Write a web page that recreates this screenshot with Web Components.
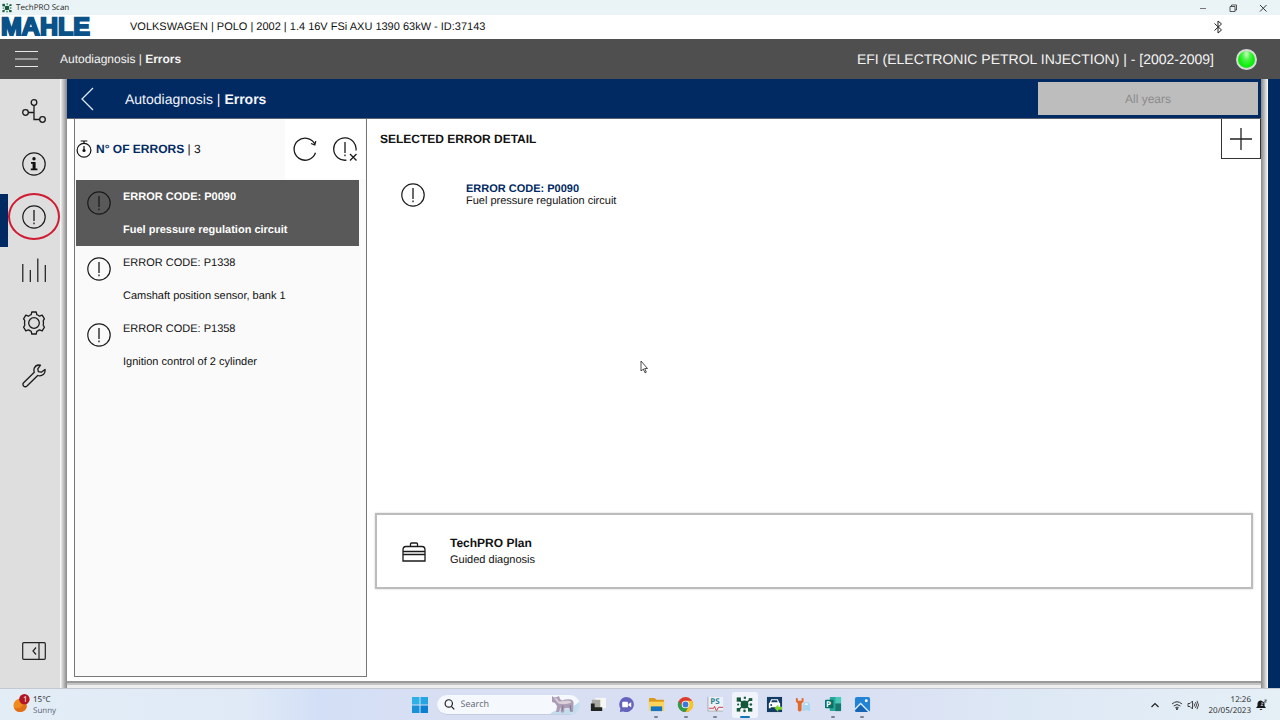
<!DOCTYPE html>
<html lang="en">
<head>
<meta charset="utf-8">
<title>TechPRO Scan</title>
<style>
  html, body { margin: 0; }
  body {
    --navy: #012a63;
    --ink: #111;
    --ui: "Liberation Sans", Arial, sans-serif;
    --os: "Open Sans", "Noto Sans", sans-serif;
    font-family: var(--ui);
    font-size: 11px;
    color: var(--ink);
    background: #fff;
    text-rendering: geometricPrecision;
  }
</style>
</head>
<body>
<scan-app></scan-app>
<script>
const ICONS = {
  scan: ['0 0 24 24', '<g fill="#15583a"><circle cx="12" cy="12" r="5.500"/><rect x="1" y="2" width="6" height="6"/><rect x="18" y="3" width="5" height="4"/><rect x="1" y="17" width="5" height="5"/><rect x="17" y="17" width="6" height="5"/><rect x="11" y="1" width="3" height="3"/><circle cx="12" cy="21" r="1.800"/><circle cx="21" cy="12" r="1.800"/><circle cx="3" cy="12" r="1.500"/><path d="M4 5l16 14M20 5L4 19" stroke="#15583a" stroke-width="2"/></g>'],
  minimise: ['0 0 12 12', '<path d="M3 6.500h6" stroke="#777" fill="none"/>'],
  restore: ['0 0 12 12', '<path d="M3 4.500h5v5H3zM4.500 4.500V3h5v5H8" stroke="#333" stroke-width=".8" fill="none"/>'],
  close: ['0 0 12 12', '<path d="M3 3l6.500 6.500M9.500 3L3 9.500" stroke="#333" fill="none"/>'],
  bluetooth: ['0 0 12 16', '<path d="M2.500 4.500l7 6.500L6 14V2l3.500 3-7 6.500" stroke="#222" fill="none"/>'],
  menu: ['0 0 24 18', '<path d="M0 1.500h23M0 9h23M0 16.500h23" stroke="#e8e8e8" stroke-width="1.200"/>'],
  back: ['0 0 24 24', '<path d="M17 1L6 12l11 11" stroke="#dfe8f5" stroke-width="1.300" fill="none"/>'],
  tree: ['0 0 24 24', '<g stroke="#1a1a1a" stroke-width="1.300" fill="none"><circle cx="12" cy="3.500" r="2.800"/><circle cx="3.500" cy="13.500" r="2.800"/><circle cx="20.500" cy="20.500" r="2.800"/><path d="M12 6.300v14.200h5.700M6.300 13.500H12"/></g>'],
  info: ['0 0 24 24', '<circle cx="12" cy="12" r="11.200" fill="none" stroke="#1a1a1a" stroke-width="1.200"/><circle cx="12" cy="6.800" r="1.700" fill="#111"/><path d="M9 10h4.600v6.500h1.800v1.800H8.800v-1.800h1.800v-4.700H9z" fill="#111"/>'],
  alert: ['0 0 24 24', '<circle cx="12" cy="12" r="11.200" fill="none" stroke="#1a1a1a" stroke-width="1.200"/><path d="M12 5v11M12 17.500v1.800" stroke="#1a1a1a" stroke-width="1.300"/>'],
  bars: ['0 0 24 24', '<path d="M.8 6v18M8.300 12v12M15.800 .5V24M23.300 7v17" stroke="#1a1a1a" stroke-width="1.200"/>'],
  gear: ['0 0 24 24', '<g fill="none" stroke="#1a1a1a" stroke-width="1.300" stroke-linejoin="round"><circle cx="12" cy="12" r="5.300"/><path d="M9.800 1h4.400l.6 2.700q1.500.5 2.700 1.500l2.700-1 2.200 3.700-1 1.500q-.5.900.1 1.800-.3.800 0 1.600-.6.900-.1 1.800l1 1.500-2.200 3.700-2.700-1q-1.200 1-2.700 1.500l-.6 2.700H9.800l-.6-2.700q-1.500-.5-2.700-1.500l-2.700 1-2.200-3.700 1-1.500q.5-.9-.1-1.800.3-.8 0-1.600.6-.9.100-1.800l-1-1.500 2.200-3.700 2.700 1q1.200-1 2.700-1.500z"/></g>'],
  wrench: ['0 0 24 24', '<path d="M18.500 1.200Q14 .3 12.300 4q-.8 2 0 4.300L1.600 18.700q-1.400 1.600 0 3.300 1.700 1.500 3.400 0L15.700 11.500q3.300 1 5.600-.9 2.300-2.200 1.700-5.200l-3.700 2.800-3-.5-.5-2.900z" fill="none" stroke="#1a1a1a" stroke-width="1.300" stroke-linejoin="round"/>'],
  panel: ['0 0 24 18', '<rect x=".7" y=".7" width="22.600" height="16.600" rx="1" fill="none" stroke="#222" stroke-width="1.200"/><path d="M17 .7v16.600M14 5.500L11 9l3 3.500" fill="none" stroke="#222" stroke-width="1.200"/>'],
  timer: ['0 0 16 18', '<g fill="none" stroke="#111" stroke-width="1.200"><circle cx="8" cy="10.300" r="6.900"/><path d="M4.700 1h6.600M8 1v2.500M8 6v4.500"/></g><circle cx="8" cy="10.500" r="1.600" fill="#111"/>'],
  refresh: ['0 0 24 24', '<path d="M22.500 15.800A11 11 0 1 1 21.800 7M22.800 4.200l-1 3.800-3.800-1.500" fill="none" stroke="#1a1a1a" stroke-width="1.300"/>'],
  clear: ['0 0 24 24', '<path d="M13.500 23.100A11.200 11.200 0 1 1 23 13.500M12 5v11M12 17.500v1.800M17 17l6.500 6.500M23.500 17L17 23.500" fill="none" stroke="#1a1a1a" stroke-width="1.300"/>'],
  plus: ['0 0 24 24', '<path d="M12 1v22M1 12h22" stroke="#222" stroke-width="1.300"/>'],
  toolbox: ['0 0 24 20', '<path d="M1 8q0-3.500 3-3.500h16q3 0 3 3.500v11H1zM8.500 4.500V2q0-1 1-1h5q1 0 1 1v2.500M1 9.500h22M1 12.500h22" fill="none" stroke="#1a1a1a" stroke-width="1.300"/>'],
  pointer: ['0 0 8 14', '<path d="M1 1v10l2.300-2L5 12.800l1.300-.6L4.700 8.500h2.800z" fill="#fff" stroke="#222" stroke-width=".8"/>'],
  weather: ['0 0 20 20', '<circle cx="7.500" cy="12" r="7" fill="#ef8a1d"/><path d="M1 14.500q5 2 10-3l3.500.5q0 6.500-7 7-5 0-6.500-4.500z" fill="#e06f16"/><circle cx="12" cy="5.500" r="5.500" fill="#b31622"/>'],
  windows: ['0 0 16 16', '<path d="M0 0h7.500v7.500H0z" fill="#2fb0e6"/><path d="M8.500 0H16v7.500H8.500z" fill="#25a5e2"/><path d="M0 8.500h7.500V16H0z" fill="#1791d8"/><path d="M8.500 8.500H16V16H8.500z" fill="#0b7fd0"/>'],
  search: ['0 0 12 12', '<circle cx="5.200" cy="4.800" r="4" fill="none" stroke="#222" stroke-width="1.300"/><path d="M8 8l3.200 3.300" stroke="#222" stroke-width="1.400"/>'],
  bear: ['0 0 34 20', '<path d="M4 20Q10 15 17 16q10-2 17-9v13z" fill="#c3dcee"/><path d="M6 2l2 1.500L11 3l2-1 1 3 2 1.500q5-2 9-1 3 1 2.500 5L27 18h-3l-.5-4-5 .5-.5 4h-3l-.5-5-1.500 4.500h-3l1-6-2-3-3-1z" fill="#ab9db5"/><path d="M8 4l3 .5 2 3 9-1q3 0 3.500 2-6 3-13 1z" fill="#dcd1db"/><path d="M17 11l-1 6M24 11l1 6" stroke="#7f7897"/>'],
  tasks: ['0 0 18 18', '<path d="M7 2h11v11H7z" fill="#f6f6f4"/><path d="M3 4h9v10H3z" fill="#aaa9a4"/><path d="M2 8h4v4h8v4H2z" fill="#222420"/>'],
  chat: ['0 0 18 18', '<path d="M9 1a8 8 0 1 1-3.500 15.300L2 17l.5-3.800A8 8 0 0 1 9 1z" fill="#6663bd"/><rect x="4.500" y="6" width="6" height="6" rx="1" fill="#fff"/><path d="M11 8.500l3-2v5.500l-3-2z" fill="#fff"/>'],
  folder: ['0 0 18 18', '<path d="M1 3q0-1 1-1h5l2 2h7q1 0 1 1v4H1z" fill="#d99a1c"/><path d="M1 6h16v10H1z" fill="#fcd45b"/><path d="M3 11h12v5H3z" fill="#1675c3"/>'],
  chrome: ['0 0 18 18', '<circle cx="9" cy="9" r="8" fill="#dd3b2e"/><path d="M2 5a8 8 0 0 0 7 12l3.500-6H5.500z" fill="#2e9e4b"/><path d="M9 17a8 8 0 0 0 7-12H9l3.500 6z" fill="#f8c622"/><circle cx="9" cy="9" r="4" fill="#fff"/><circle cx="9" cy="9" r="3.100" fill="#3979df"/>'],
  ps: ['0 0 18 18', '<rect x="1" y="1" width="16" height="16" fill="#edf0f4"/><path d="M2 13h5l1-2 2 5 2-4h5" fill="none" stroke="#c9384a"/><path d="M1 1v15h16" fill="none" stroke="#a1a9b6"/>'],
  adas: ['0 0 18 18', '<rect x="1" y="1" width="16" height="16" fill="#123b66"/><path d="M4 7l1.500-3.500h7L14 7l1 1v5h-2v-1H5v1H3V8z" fill="#fff"/><path d="M5.500 6.500l.8-2h5.400l.8 2z" fill="#123b66"/><circle cx="5.500" cy="9.500" r="1" fill="#123b66"/><path d="M9 13l4-4v2.500h4v3h-4V17z" fill="#7bd52a"/>'],
  repair: ['0 0 18 18', '<path d="M1 2v4l2 2v7q2 3 4 0V8l2-2V2L7 2.500V5H3V2.500z" fill="#e2692b"/><path d="M8 10l1.500-3.500h5L16 10v6h-2v-1h-4v1H8z" fill="#a9d6f1"/><path d="M10 9.500l.7-1.800h2.600l.7 1.800z" fill="#e9f5fd"/>'],
  publisher: ['0 0 18 18', '<rect x="5" y="1" width="12" height="15" rx="1" fill="#2aa79b"/><path d="M11 1h6v7h-6z" fill="#49c9b7"/><path d="M11 8h6v8h-6z" fill="#14786f"/><rect x="0" y="4" width="9" height="9" rx="1" fill="#087167"/>'],
  photos: ['0 0 18 18', '<rect x="1" y="1" width="16" height="16" rx="2" fill="#2384d5"/><path d="M1 13l6-6 10 10H3q-2 0-2-2z" fill="#d8f0fb"/><path d="M1 15l6-6 8 8H3q-2 0-2-2z" fill="#1565b4"/><circle cx="13" cy="5" r="1.500" fill="#fff"/>'],
  chevron: ['0 0 12 12', '<path d="M2.500 8L6 4.500 9.500 8" fill="none" stroke="#222" stroke-width="1.200"/>'],
  wifi: ['0 0 12 12', '<path d="M1 5q5-4.500 10 0M2.700 7q3.300-3 6.600 0M4.300 8.800q1.700-1.500 3.400 0" fill="none" stroke="#333"/><circle cx="6" cy="10" r="1" fill="#222"/>'],
  sound: ['0 0 12 12', '<path d="M1 4.500h2l2.500-2.500v8L3 7.500H1zM7 4.500q1 1.500 0 3M8.500 3q2 3 0 6M10 1.800q3 4.200 0 8.400" fill="none" stroke="#333" stroke-width=".9"/>'],
  bell: ['0 0 12 12', '<path d="M1 9l1.500-2V4.500Q3 1.500 6 1.500l3.500 2V7L11 9zM4.500 10h3q-1.500 2-3 0z" fill="#16181c"/><path d="M6 4h2.200L6 6.500h2.200" fill="none" stroke="#cfd8e6" stroke-width=".7"/><path d="M9.500 1h2l-2 2h2" fill="none" stroke="#16181c" stroke-width=".7"/>']
};

const RESET = `
  *, *::before, *::after { box-sizing: border-box; }
  button { font: inherit; color: inherit; background: none; border: 0; padding: 0; margin: 0; text-rendering: inherit; }
  button { display: flex; align-items: center; justify-content: center; }
  ul { list-style: none; margin: 0; padding: 0; }
  h1, h2, p { margin: 0; font: inherit; }
`;

function define(name, css, html) {
  customElements.define(name, class extends HTMLElement {
    constructor() {
      super();
      const root = this.attachShadow({ mode: 'open' });
      root.innerHTML = `<style>${RESET}${css}</style>${typeof html === 'function' ? html(this) : html}`;
    }
  });
}

define('ui-icon', `
  :host { display: block; flex: none; width: 24px; height: 24px; }
  svg { display: block; width: 100%; height: 100%; }
`, el => {
  const [box, art] = ICONS[el.getAttribute('name')];
  return `<svg viewBox="${box}" aria-hidden="true">${art}</svg>`;
});

define('title-bar', `
  :host { display: flex; align-items: center; height: 15px; padding: 0 2px 0 2px; background: #eaf4f6; font: 8px/14px var(--os); color: #222; }
  .app { width: 10px; height: 10px; margin-right: 4px; }
  .name { flex: 1; }
  button { width: 30px; height: 14px; }
  button ui-icon { width: 12px; height: 12px; }
`, `
  <ui-icon class="app" name="scan"></ui-icon>
  <span class="name"><slot></slot></span>
  <button aria-label="Minimise"><ui-icon name="minimise"></ui-icon></button>
  <button aria-label="Restore"><ui-icon name="restore"></ui-icon></button>
  <button aria-label="Close"><ui-icon name="close"></ui-icon></button>
`);

define('brand-bar', `
  :host { display: flex; align-items: center; height: 24px; background: #fff; font-size: 11px; }
  .logo { width: 130px; padding-left: 1px; font: bold 25px/24px var(--ui); color: #0b5288; -webkit-text-stroke: 2px #0b5288; }
  .car { flex: 1; }
  ui-icon { width: 12px; height: 16px; margin-right: 56px; }
`, `
  <span class="logo">MAHLE</span>
  <span class="car"><slot></slot></span>
  <ui-icon name="bluetooth"></ui-icon>
`);

define('system-bar', `
  :host { display: flex; align-items: center; height: 40px; background: #4f4f4f; color: #f4f4f4; }
  button { width: 60px; height: 40px; padding-right: 7px; }
  button ui-icon { height: 18px; }
  .path { flex: 1; font-size: 12px; }
  .system { font-size: 14px; }
  .led { width: 21px; height: 21px; margin: 0 23px 0 22px; border-radius: 50%; border: 2px solid #d5dcd5; background: radial-gradient(ellipse at 50% 18%, #c8ffc0 0, #52f24c 30%, #10f010 60%, #0fd60f 100%); }
`, `
  <button aria-label="Menu"><ui-icon name="menu"></ui-icon></button>
  <span class="path"><slot name="path"></slot></span>
  <span class="system"><slot name="system"></slot></span>
  <span class="led" role="img" aria-label="Connected"></span>
`);

define('side-nav', `
  :host { display: flex; flex-direction: column; width: 60px; padding: 5px 0 11px; background: #dedede; }
  button { position: relative; width: 100%; height: 53px; padding-left: 7px; }
  .current::before { content: ""; position: absolute; left: 8px; right: 0; top: 3px; bottom: 3px; border: 2px solid #d01c33; border-radius: 50%; }
  .current::after { content: ""; position: absolute; left: 0; top: 4px; width: 8px; height: 100%; background: var(--navy); }
  .fold { margin-top: auto; }
  .fold ui-icon { height: 18px; }
`, `
  <button aria-label="Systems"><ui-icon name="tree"></ui-icon></button>
  <button aria-label="Information"><ui-icon name="info"></ui-icon></button>
  <button class="current" aria-label="Errors" aria-current="page"><ui-icon name="alert"></ui-icon></button>
  <button aria-label="Parameters"><ui-icon name="bars"></ui-icon></button>
  <button aria-label="Settings"><ui-icon name="gear"></ui-icon></button>
  <button aria-label="Adjustments"><ui-icon name="wrench"></ui-icon></button>
  <button class="fold" aria-label="Collapse panel"><ui-icon name="panel"></ui-icon></button>
`);

define('page-header', `
  :host { display: flex; align-items: center; height: 40px; padding-right: 3px; background: var(--navy); color: #f2f5fa; border-bottom: 1px solid #5b6470; }
  .back { width: 58px; height: 39px; padding-right: 17px; }
  .path { flex: 1; font-size: 14px; }
  .years { width: 220px; height: 33px; background: #bdbdbd; color: #8b8b8b; font-size: 12px; }
`, `
  <button class="back" aria-label="Back"><ui-icon name="back"></ui-icon></button>
  <h1 class="path"><slot></slot></h1>
  <button class="years" disabled>All years</button>
`);

define('error-row', `
  :host { display: block; }
  button { display: grid; grid-template-columns: 24px 1fr; column-gap: 12px; width: 283px; max-width: 100%; height: 66px; padding: 9px 11px; text-align: left; align-items: start; justify-content: stretch; line-height: 16px; }
  ui-icon { margin-top: 2px; }
  .text { display: grid; row-gap: 17px; }
  :host([selected]) button { background: #595959; color: #fff; font-weight: bold; }
`, `
  <button>
    <ui-icon name="alert"></ui-icon>
    <span class="text"><slot name="code"></slot><slot></slot></span>
  </button>
`);

define('error-list', `
  :host { display: block; width: 293px; border: 1px solid #777; border-top: 0; background: #fafafa; }
  header { display: flex; align-items: center; height: 60px; padding: 0 1px; }
  .timer { width: 16px; height: 18px; margin-right: 4px; }
  .count { flex: 1; font-size: 12px; }
  .tools { display: flex; align-self: stretch; background: #fff; }
  .tools button { width: 40px; }
  ul { padding: 1px 1px 0; }
  b { color: var(--navy); }
`, `
  <header>
    <ui-icon class="timer" name="timer"></ui-icon>
    <h2 class="count"><b>N° OF ERRORS</b> | 3</h2>
    <div class="tools">
      <button aria-label="Refresh"><ui-icon name="refresh"></ui-icon></button>
      <button aria-label="Clear errors"><ui-icon name="clear"></ui-icon></button>
    </div>
  </header>
  <ul>
    <li><error-row selected><span slot="code">ERROR CODE: P0090</span>Fuel pressure regulation circuit</error-row></li>
    <li><error-row><span slot="code">ERROR CODE: P1338</span>Camshaft position sensor, bank 1</error-row></li>
    <li><error-row><span slot="code">ERROR CODE: P1358</span>Ignition control of 2 cylinder</error-row></li>
  </ul>
`);

define('error-detail', `
  :host { display: flex; flex-direction: column; flex: 1; min-width: 0; }
  header { display: flex; justify-content: space-between; height: 40px; padding-left: 13px; font: bold 12px/40px var(--ui); }
  header button { width: 40px; height: 40px; border: 1px solid #333; border-top: 0; }
  .item { display: flex; align-items: center; gap: 41px; margin-top: 24px; padding-left: 34px; line-height: 12px; }
  .item b { display: block; color: var(--navy); }
  .plan { gap: 24px; justify-content: flex-start; align-items: center; text-align: left; height: 76px; margin: auto 8px 92px; padding: 2px 0 0 25px; border: 2px solid #bcbcbc; background: #fff; box-shadow: 0 0 2px #ccc; line-height: 17px; }
  .plan ui-icon { height: 20px; }
  .plan b { display: block; font-size: 12px; }
`, `
  <header>
    <h2>SELECTED ERROR DETAIL</h2>
    <button aria-label="Expand"><ui-icon name="plus"></ui-icon></button>
  </header>
  <div class="item">
    <ui-icon name="alert"></ui-icon>
    <p><b>ERROR CODE: P0090</b>Fuel pressure regulation circuit</p>
  </div>
  <button class="plan">
    <ui-icon name="toolbox"></ui-icon>
    <span><b>TechPRO Plan</b>Guided diagnosis</span>
  </button>
`);

define('diagnosis-page', `
  :host { display: flex; flex: 1; min-width: 0; padding: 0 7px; border-right: 12px solid var(--navy); background: linear-gradient(90deg, #fff 0, #d8d8d8 2px, #888 7px, #888 calc(100% - 7px), #d8d8d8 calc(100% - 2px), #fff 100%); }
  main { display: flex; flex-direction: column; flex: 1; min-width: 0; margin-bottom: 7px; background: #fff; box-shadow: 0 2px 0 #999, 0 4px 0 #c4c4c4, 0 7px 0 #eee; }
  .body { display: flex; flex: 1; padding-left: 7px; }
  error-list { margin-bottom: 4px; }
`, `
  <main>
    <page-header>Autodiagnosis | <b>Errors</b></page-header>
    <div class="body">
      <error-list></error-list>
      <error-detail></error-detail>
    </div>
  </main>
`);

define('task-icon', `
  :host { display: block; }
  button { position: relative; width: 26px; height: 26px; border-radius: 3px; font: 8px/9px var(--os); }
  button ui-icon { width: 17px; height: 17px; }
  :host([open]) button::before { content: ""; position: absolute; bottom: 0; left: 11px; width: 4px; height: 2px; border-radius: 1px; background: #7b8391; }
  :host([active]) button { background: #f1f5fb; }
  :host([active]) button::before { left: 8px; width: 10px; background: #1176b5; }
  .tag { position: absolute; left: 8px; top: 5px; color: #2e8294; font-weight: bold; }
  .tag.letter { left: 6px; top: 8px; color: #fff; }
`, el => {
  const tag = el.getAttribute('tag') || '';
  return `<button aria-label="${el.getAttribute('label')}"><ui-icon name="${el.getAttribute('icon')}"></ui-icon>${tag ? `<span class="tag${tag.length === 1 ? ' letter' : ''}">${tag}</span>` : ''}</button>`;
});

define('task-bar', `
  :host { display: grid; grid-template-columns: 1fr auto 1fr; align-items: center; height: 32px; border-top: 1px solid #c5c8d0; background: linear-gradient(90deg, #e2edf6 0, #e0eaf7 19%, #d3dff6 25%, #d8dff3 34%, #d9dff2 65%, #dde8f5 80%, #e5eff6 100%); font: 8px/11px var(--os); color: #222; }
  .weather { position: relative; display: flex; gap: 1px; padding-left: 13px; }
  .weather ui-icon { width: 19px; height: 19px; }
  .weather small { display: block; font-size: 8px; color: #5d6572; }
  .badge { position: absolute; left: 23px; top: 0; color: #fff; }
  .centre { display: flex; align-items: center; }
  .start { width: 30px; height: 28px; margin-right: 2px; }
  .start ui-icon { width: 16px; height: 16px; }
  .find { display: flex; align-items: center; width: 143px; height: 20px; padding: 0 0 0 7px; margin-right: 5px; overflow: hidden; border-radius: 10px; background: #f5f8fd; border-bottom: 1px solid #c5cde0; }
  .find .lens { width: 11px; height: 11px; }
  .find .bear { width: 34px; height: 20px; }
  input { flex: 1; min-width: 0; border: 0; padding: 0 0 0 6px; background: none; font: 9px/18px var(--os); appearance: none; text-rendering: inherit; }
  input::placeholder { color: #5f6570; opacity: 1; }
  .apps { display: flex; justify-content: space-between; width: 291px; }
  .tray { display: flex; justify-content: flex-end; align-items: center; padding-right: 13px; }
  .tray ui-icon { width: 12px; height: 12px; }
  .up { margin-right: 10px; }
  .net { gap: 4px; margin-right: 10px; }
  .clock { text-align: right; margin-right: 4px; }
`, `
  <div class="weather"><ui-icon name="weather"></ui-icon><span class="badge">1</span><p>15°C<small>Sunny</small></p></div>
  <div class="centre">
    <button class="start" aria-label="Start"><ui-icon name="windows"></ui-icon></button>
    <label class="find"><ui-icon class="lens" name="search"></ui-icon><input type="search" placeholder="Search" aria-label="Search"><ui-icon class="bear" name="bear"></ui-icon></label>
    <div class="apps">
      <task-icon icon="tasks" label="Task view"></task-icon>
      <task-icon icon="chat" label="Chat"></task-icon>
      <task-icon icon="folder" label="File Explorer" open></task-icon>
      <task-icon icon="chrome" label="Chrome" open></task-icon>
      <task-icon icon="ps" label="PS" tag="PS" open></task-icon>
      <task-icon icon="scan" label="TechPRO Scan" open active></task-icon>
      <task-icon icon="adas" label="Vehicle update"></task-icon>
      <task-icon icon="repair" label="Repair"></task-icon>
      <task-icon icon="publisher" label="Publisher" tag="P" open></task-icon>
      <task-icon icon="photos" label="Photos" open></task-icon>
    </div>
  </div>
  <div class="tray">
    <button class="up" aria-label="Hidden icons"><ui-icon name="chevron"></ui-icon></button>
    <button class="net" aria-label="Network and sound"><ui-icon name="wifi"></ui-icon><ui-icon name="sound"></ui-icon></button>
    <div class="clock">12:26<br>20/05/2023</div>
    <button aria-label="Notifications"><ui-icon name="bell"></ui-icon></button>
  </div>
`);

define('scan-app', `
  :host { position: relative; display: flex; flex-direction: column; min-height: 100vh; }
  .work { display: flex; flex: 1; }
  .cursor { position: absolute; left: 50%; top: 50%; width: 8px; height: 14px; }
`, `
  <title-bar>TechPRO Scan</title-bar>
  <brand-bar>VOLKSWAGEN | POLO | 2002 | 1.4 16V FSi AXU 1390 63kW - ID:37143</brand-bar>
  <system-bar>
    <span slot="path">Autodiagnosis | <b>Errors</b></span>
    <span slot="system">EFI (ELECTRONIC PETROL INJECTION) | - [2002-2009]</span>
  </system-bar>
  <div class="work">
    <side-nav></side-nav>
    <diagnosis-page></diagnosis-page>
  </div>
  <task-bar></task-bar>
  <ui-icon class="cursor" name="pointer"></ui-icon>
`);
</script>
</body>
</html>
